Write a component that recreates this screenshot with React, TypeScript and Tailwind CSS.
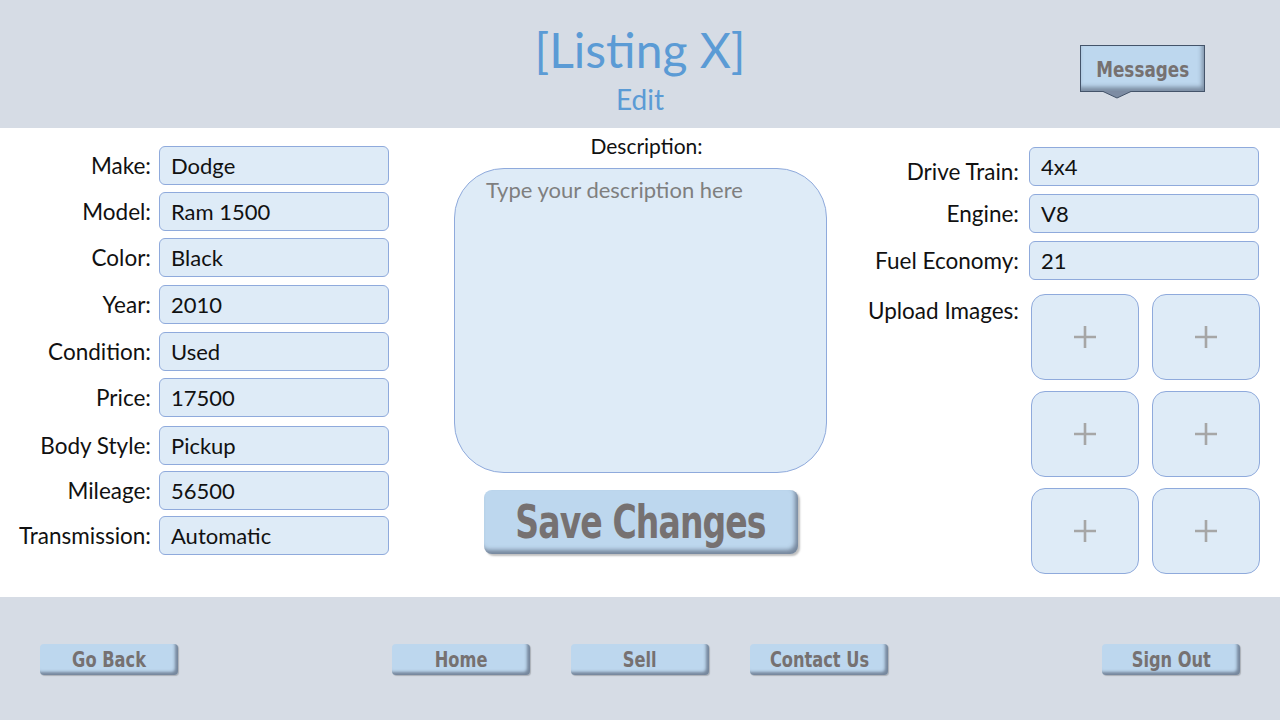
import React from "react";

const body = { fontFamily: "Lato, 'Open Sans', sans-serif" };
const cond = {
  fontFamily: "'DejaVu Sans Condensed', 'Liberation Sans Narrow', Roboto, sans-serif",
  fontStretch: "condensed" as const,
};

function Field({ label, value, mt }: { label: string; value: string; mt: string }) {
  return (
    <div className={`flex items-center h-[39px] ${mt}`}>
      <div className="w-[151px] text-right text-[22.5px] text-[#111]">{label}</div>
      <div className="ml-[8px] w-[230px] h-[39px] rounded-[6px] bg-[#deebf7] border border-[#8faadc] flex items-center px-[11px] text-[22px] text-[#111]">
        {value}
      </div>
    </div>
  );
}

function NavBtn({ label }: { label: string }) {
  return (
    <div className="w-[138px] h-[31px] rounded-[4px] bg-[#bdd7ee] flex items-center justify-center shadow-[inset_-3px_-3px_3px_rgba(60,70,90,0.55),1px_1px_1px_rgba(0,0,0,0.2)]">
      <span className="text-[22px] font-bold text-[#767171] scale-x-[0.82] whitespace-nowrap" style={cond}>
        {label}
      </span>
    </div>
  );
}

function ImgBox() {
  return (
    <div className="w-[108px] h-[86px] rounded-[14px] bg-[#deebf7] border border-[#8faadc] flex items-center justify-center">
      <svg width="24" height="24" viewBox="0 0 24 24">
        <path d="M12 1v22M1 12h22" stroke="#a6a6a6" strokeWidth="2.6" />
      </svg>
    </div>
  );
}

export default function App() {
  return (
    <div className="w-[1280px] h-[720px] flex flex-col overflow-hidden bg-white" style={body}>
      {/* Header */}
      <div className="h-[128px] bg-[#d6dce5] relative flex flex-col items-center">
        <div className="text-[48px] leading-none text-[#5b9bd5] mt-[26px]">[Listing X]</div>
        <div className="text-[28px] leading-none text-[#5b9bd5] mt-[11px]">Edit</div>
        <div className="absolute left-[1080px] top-[45px] w-[125px] h-[47px]">
          <div className="w-full h-full bg-[#bdd7ee] border border-[#44546a] flex items-center justify-center pt-[2px] shadow-[inset_-2px_-4px_4px_rgba(60,70,90,0.5)]">
            <span className="text-[22px] font-bold text-[#767171] scale-x-[0.85] whitespace-nowrap" style={cond}>
              Messages
            </span>
          </div>
          <svg className="absolute left-[22px] top-[46px]" width="30" height="8" viewBox="0 0 30 8">
            <path d="M0 0 L15 7 L30 0 Z" fill="#7d8ca3" />
            <path d="M0 0 L15 7 L30 0" fill="none" stroke="#44546a" strokeWidth="1" />
          </svg>
        </div>
      </div>

      {/* Main */}
      <div className="h-[469px] flex">
        {/* Left */}
        <div className="w-[390px] pt-[18px] flex flex-col">
          <Field label="Make:" value="Dodge" mt="mt-0" />
          <Field label="Model:" value="Ram 1500" mt="mt-[7px]" />
          <Field label="Color:" value="Black" mt="mt-[7px]" />
          <Field label="Year:" value="2010" mt="mt-[8px]" />
          <Field label="Condition:" value="Used" mt="mt-[8px]" />
          <Field label="Price:" value="17500" mt="mt-[7px]" />
          <Field label="Body Style:" value="Pickup" mt="mt-[9px]" />
          <Field label="Mileage:" value="56500" mt="mt-[6px]" />
          <Field label="Transmission:" value="Automatic" mt="mt-[6px]" />
        </div>

        {/* Middle */}
        <div className="ml-[64px] w-[373px] flex flex-col items-center">
          <div className="text-[21px] text-[#111] mt-[5px] leading-[26px] ml-[12px]">Description:</div>
          <div className="mt-[9px] w-[373px] h-[305px] rounded-[50px] bg-[#deebf7] border border-[#8faadc] px-[31px] pt-[4px] text-[22px] text-[#7f7f7f]">
            Type your description here
          </div>
          <div className="mt-[17px] w-[314px] h-[64px] rounded-[8px] bg-[#bdd7ee] flex items-center justify-center shadow-[inset_-3px_-4px_4px_rgba(60,70,90,0.55),2px_2px_2px_rgba(0,0,0,0.25)]">
            <span className="text-[46px] font-black text-[#767171] scale-x-[0.8] whitespace-nowrap tracking-tight" style={cond}>
              Save Changes
            </span>
          </div>
        </div>

        {/* Right */}
        <div className="ml-[33px] w-[400px] pt-[19px] flex flex-col">
          <div className="flex flex-col gap-[8px]">
            {[
              ["Drive Train:", "4x4", "pt-[10px]"],
              ["Engine:", "V8", "pt-0"],
              ["Fuel Economy:", "21", "pt-0"],
            ].map(([l, v, p]) => (
              <div key={l} className="flex items-center h-[39px]">
                <div className={`w-[159px] text-right text-[22.5px] text-[#111] ${p}`}>{l}</div>
                <div className="ml-[10px] w-[230px] h-[39px] rounded-[6px] bg-[#deebf7] border border-[#8faadc] flex items-center px-[11px] text-[22px] text-[#111]">
                  {v}
                </div>
              </div>
            ))}
          </div>
          <div className="flex mt-[14px]">
            <div className="w-[159px] text-right text-[22.5px] text-[#111]">Upload Images:</div>
            <div className="ml-[12px] grid grid-cols-[108px_108px] gap-x-[13px] gap-y-[11px]">
              <ImgBox />
              <ImgBox />
              <ImgBox />
              <ImgBox />
              <ImgBox />
              <ImgBox />
            </div>
          </div>
        </div>
      </div>

      {/* Footer */}
      <div className="flex-1 bg-[#d6dce5] flex items-start pt-[47px] px-[40px]">
        <NavBtn label="Go Back" />
        <div className="ml-[214px]">
          <NavBtn label="Home" />
        </div>
        <div className="ml-[41px]">
          <NavBtn label="Sell" />
        </div>
        <div className="ml-[41px]">
          <NavBtn label="Contact Us" />
        </div>
        <div className="ml-auto">
          <NavBtn label="Sign Out" />
        </div>
      </div>
    </div>
  );
}
